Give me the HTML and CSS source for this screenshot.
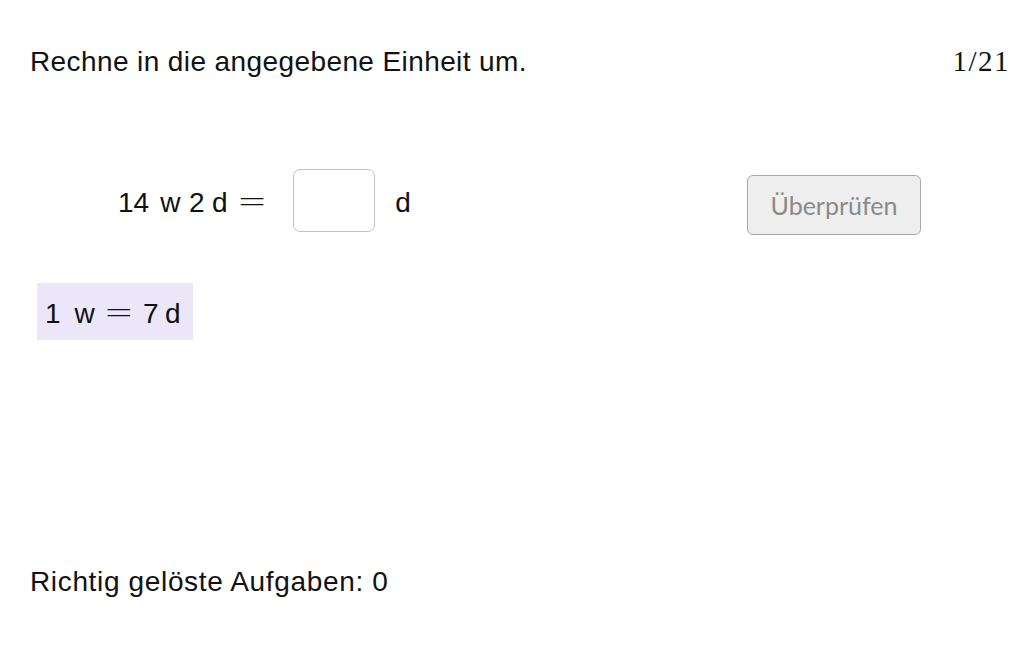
FILE: index.html
```html
<!DOCTYPE html>
<html lang="de">
<head>
<meta charset="utf-8">
<title>Einheiten umrechnen</title>
<link rel="stylesheet" href="styles.css">
</head>
<body>
<div class="page">
  <div class="header">
    <div class="title">Rechne in die angegebene Einheit um.</div>
    <div class="counter">1/21</div>
  </div>
  <div class="task">
    <div class="equation">
      <span class="txt">14</span>
      <span class="txt sym-w">w</span>
      <span class="txt sym-2">2</span>
      <span class="txt sym-d">d</span>
      <span class="eq main-eq">=</span>
      <span class="box"></span>
      <span class="txt unit">d</span>
    </div>
    <button class="check">Überprüfen</button>
  </div>
  <div class="hint">
    <span>1</span>
    <span class="hint-w">w</span>
    <span class="eq hint-eq">=</span>
    <span class="hint-7">7</span>
    <span class="hint-d">d</span>
  </div>
  <div class="score">Richtig gelöste Aufgaben: 0</div>
</div>
</body>
</html>
```
FILE: styles.css
```css
html, body {
  margin: 0;
  padding: 0;
  background: #ffffff;
}
.page {
  width: 1032px;
  height: 645px;
  box-sizing: border-box;
  padding: 45px 22px 0 30px;
  font-family: "Liberation Sans", Arial, sans-serif;
  font-size: 28px;
  line-height: 32px;
  letter-spacing: 0.4px;
  color: #111;
  display: flex;
  flex-direction: column;
}
.header {
  display: flex;
  justify-content: space-between;
  align-items: baseline;
}
.counter {
  font-family: "Liberation Serif", serif;
  font-size: 29px;
  letter-spacing: 1.5px;
}
.task {
  display: flex;
  align-items: flex-start;
  margin-top: 91px;
  padding-left: 88px;
}
.equation {
  display: flex;
  align-items: flex-start;
  width: 629px;
  letter-spacing: 0;
}
.txt {
  margin-top: 18px;
  white-space: pre;
}
.sym-w {
  margin-left: 11px;
}
.sym-2 {
  margin-left: 8.5px;
}
.sym-d {
  margin-left: 7.5px;
}
.eq {
  font-family: "DejaVu Sans", sans-serif;
  font-size: 36px;
  font-weight: 200;
}
.main-eq {
  margin-top: 16px;
  margin-left: 9.5px;
  margin-right: 26px;
}
.box {
  width: 82px;
  height: 63px;
  border: 1px solid #c2c2c2;
  border-radius: 7px;
  box-sizing: border-box;
}
.unit {
  margin-left: 20px;
}
.check {
  width: 174px;
  height: 60px;
  margin-top: 6px;
  background: #eeeeee;
  border: 1px solid #a9a9a9;
  border-radius: 6px;
  color: #8a8a8a;
  font-family: Lato, "Open Sans", sans-serif;
  font-size: 25px;
  padding: 0;
}
.hint {
  align-self: flex-start;
  margin-top: 48px;
  margin-left: 7px;
  background: #ebe7f8;
  height: 57px;
  box-sizing: border-box;
  padding: 15px 12px 0 8px;
  display: flex;
  align-items: flex-start;
  letter-spacing: 0;
}
.hint-w {
  margin-left: 14px;
}
.hint-eq {
  margin: -2px 9px 0 9px;
}
.hint-d {
  margin-left: 6.5px;
}
.score {
  margin-top: 226px;
  letter-spacing: 0.65px;
}
```
